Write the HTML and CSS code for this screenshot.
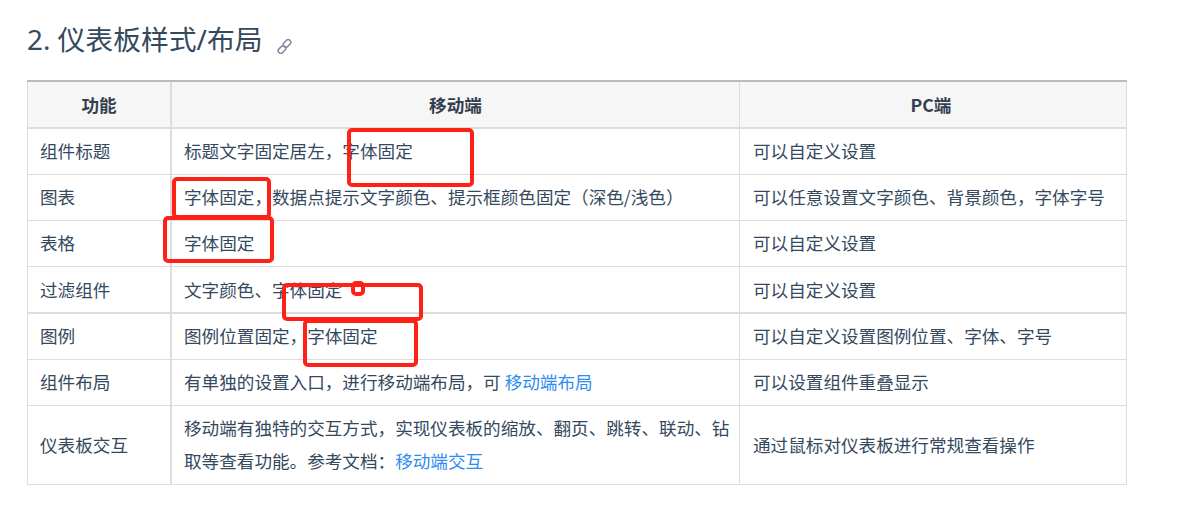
FILE: index.html
```html
<!DOCTYPE html>
<html lang="zh-CN">
<head>
<meta charset="utf-8">
<title>仪表板样式/布局</title>
<link rel="stylesheet" href="styles.css">
</head>
<body>
<main class="page">
  <h2 class="title">2. 仪表板样式/布局<svg class="anchor" viewBox="0 0 16 16" width="15" height="15" fill="none" stroke="#7f8c9c" stroke-width="1.6"><rect x="6.2" y="1.9" width="9" height="5.6" rx="2.8" transform="rotate(-45 10.7 4.7)"/><rect x="0.8" y="8.5" width="9" height="5.6" rx="2.8" transform="rotate(-45 5.3 11.3)"/></svg></h2>
  <table class="grid">
    <colgroup><col class="c1"><col class="c2"><col class="c3"></colgroup>
    <thead>
      <tr><th>功能</th><th>移动端</th><th>PC端</th></tr>
    </thead>
    <tbody>
      <tr><td>组件标题</td><td>标题文字固定居左，字体固定</td><td>可以自定义设置</td></tr>
      <tr><td>图表</td><td>字体固定，数据点提示文字颜色、提示框颜色固定（深色/浅色）</td><td>可以任意设置文字颜色、背景颜色，字体字号</td></tr>
      <tr><td>表格</td><td>字体固定</td><td>可以自定义设置</td></tr>
      <tr class="thick"><td>过滤组件</td><td>文字颜色、字体固定</td><td>可以自定义设置</td></tr>
      <tr><td>图例</td><td>图例位置固定，字体固定</td><td>可以自定义设置图例位置、字体、字号</td></tr>
      <tr><td>组件布局</td><td>有单独的设置入口，进行移动端布局，可 <a href="#">移动端布局</a></td><td>可以设置组件重叠显示</td></tr>
      <tr class="tall"><td>仪表板交互</td><td>移动端有独特的交互方式，实现仪表板的缩放、翻页、跳转、联动、钻取等查看功能。参考文档：<a href="#">移动端交互</a></td><td>通过鼠标对仪表板进行常规查看操作</td></tr>
    </tbody>
  </table>
</main>
<svg class="marks" width="1193" height="532" fill="none" stroke="#ff2116" stroke-width="4" stroke-linejoin="round">
  <rect x="349" y="130" width="123" height="55" rx="3"/>
  <rect x="174" y="179" width="95" height="38" rx="3"/>
  <rect x="165" y="218" width="107" height="43" rx="3"/>
  <rect x="284" y="285" width="137" height="34" rx="3"/>
  <rect x="353" y="283" width="10" height="11" rx="3"/>
  <rect x="305" y="321" width="111" height="44" rx="3"/>
</svg>
</body>
</html>
```
FILE: styles.css
```css
html, body {
  margin: 0;
  padding: 0;
  background: #fff;
}
body {
  font-family: "Noto Sans CJK SC", "Noto Sans", sans-serif;
  color: #34495e;
  font-size: 17.6px;
}
.page {
  padding: 0 27px;
}
.title {
  margin: 0;
  padding-top: 19px;
  height: 80px;
  box-sizing: border-box;
  font-size: 27.8px;
  line-height: 40px;
  font-weight: 400;
  color: #34495e;
  font-family: "Noto Sans", "Noto Sans CJK SC", sans-serif;
}
.anchor {
  margin-left: 14px;
  vertical-align: -4px;
}
.grid {
  border-collapse: separate;
  border-spacing: 0;
  width: 1100px;
  table-layout: fixed;
  border-top: 2px solid #bbb;
}
.c1 { width: 145px; }
.c2 { width: 568px; }
.c3 { width: 387px; }
th, td {
  padding: 0 8px 2px 12px;
  border-right: 1px solid #ddd;
  border-bottom: 1px solid #ddd;
  line-height: 33px;
  box-sizing: border-box;
}
th:first-child, td:first-child {
  border-left: 1px solid #ddd;
  border-right: 2px solid #ddd;
}
th {
  height: 47px;
  background: #f6f6f6;
  border-bottom: 2px solid #ddd;
  font-weight: 700;
  text-align: center;
  color: #34404f;
  padding: 0 12px;
}
th:last-child {
  padding: 0 17px 0 13px;
}
td {
  height: 46px;
  text-align: left;
}
td:last-child {
  padding-left: 13px;
}
tbody tr.thick td {
  height: 47px;
  padding-bottom: 0;
  border-bottom: 2px solid #ddd;
}
tr.tall td {
  height: 79px;
}
a {
  color: #2d8cf0;
  text-decoration: none;
}
.marks {
  position: absolute;
  left: 0;
  top: 0;
  pointer-events: none;
}
```
